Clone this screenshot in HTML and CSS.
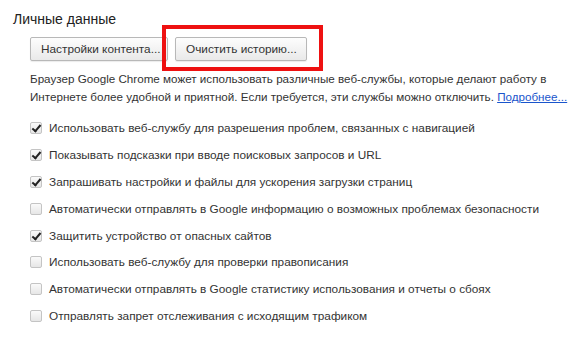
FILE: index.html
```html
<!DOCTYPE html>
<html lang="ru">
<head>
  <meta charset="UTF-8" />
  <title>Личные данные</title>
  <link rel="stylesheet" href="styles.css">
</head>
<body>
  <div class="section">
    <div class="title">Личные данные</div>

    <div class="content">
      <div class="buttons">
        <button class="btn btn-first">Настройки контента...</button>
        <button class="btn btn-second">Очистить историю...</button>
        <div class="highlight"></div>
      </div>

      <p class="desc">
        Браузер Google Chrome может использовать различные веб-службы, которые делают работу в<br>
        Интернете более удобной и приятной. Если требуется, эти службы можно отключить. <a href="#">Подробнее...</a>
      </p>

      <ul class="options">
        <li><span class="box checked"></span>Использовать веб-службу для разрешения проблем, связанных с навигацией</li>
        <li><span class="box checked"></span>Показывать подсказки при вводе поисковых запросов и URL</li>
        <li><span class="box checked"></span>Запрашивать настройки и файлы для ускорения загрузки страниц</li>
        <li><span class="box"></span>Автоматически отправлять в Google информацию о возможных проблемах безопасности</li>
        <li><span class="box checked"></span>Защитить устройство от опасных сайтов</li>
        <li><span class="box"></span>Использовать веб-службу для проверки правописания</li>
        <li><span class="box"></span>Автоматически отправлять в Google статистику использования и отчеты о сбоях</li>
        <li><span class="box"></span>Отправлять запрет отслеживания с исходящим трафиком</li>
      </ul>
    </div>
  </div>
</body>
</html>
```

FILE: styles.css
```css
* {
  box-sizing: border-box;
}

body {
  margin: 0;
  background: #fff;
  font-family: "Liberation Sans", Arial, sans-serif;
  color: #333;
}

.section {
  padding: 10px 0 0 13px;
}

.title {
  font-size: 14px;
  color: #222;
  line-height: 18px;
}

.content {
  margin-left: 17px;
}

.buttons {
  position: relative;
  display: flex;
  gap: 7px;
  margin-top: 9px;
}

.btn {
  height: 24px;
  padding: 0 10px;
  font-family: inherit;
  font-size: 11.8px;
  color: #333;
  white-space: nowrap;
  background: linear-gradient(#fdfdfd, #e9e9e9);
  border: 1px solid #b8b8b8;
  border-radius: 2px;
  box-shadow: 0 1px 1px rgba(0, 0, 0, 0.08);
}

.btn-first {
  width: 138px;
  text-align: left;
}

.btn-second {
  width: 132px;
}

/* red marker drawn over the second button */
.highlight {
  position: absolute;
  left: 132px;
  top: -12px;
  width: 161px;
  height: 46px;
  border: 4px solid #ee1111;
}

.desc {
  margin: 9px 0 0;
  font-size: 11.65px;
  line-height: 18px;
  color: #333;
  white-space: nowrap;
}

.desc a {
  color: #1a55cc;
}

.options {
  list-style: none;
  margin: 9px 0 0;
  padding: 0;
}

.options li {
  display: flex;
  align-items: center;
  height: 26.8px;
  font-size: 11.8px;
  color: #333;
}

.box {
  width: 12px;
  height: 12px;
  margin-right: 7px;
  border: 1px solid #c4c4c4;
  border-radius: 2px;
  background: linear-gradient(#fafafa, #e6e6e6);
  flex-shrink: 0;
  position: relative;
}

.box.checked::after {
  content: "";
  position: absolute;
  left: 3px;
  top: 0px;
  width: 3px;
  height: 7px;
  border: solid #222;
  border-width: 0 2px 2px 0;
  transform: rotate(40deg);
}
```
